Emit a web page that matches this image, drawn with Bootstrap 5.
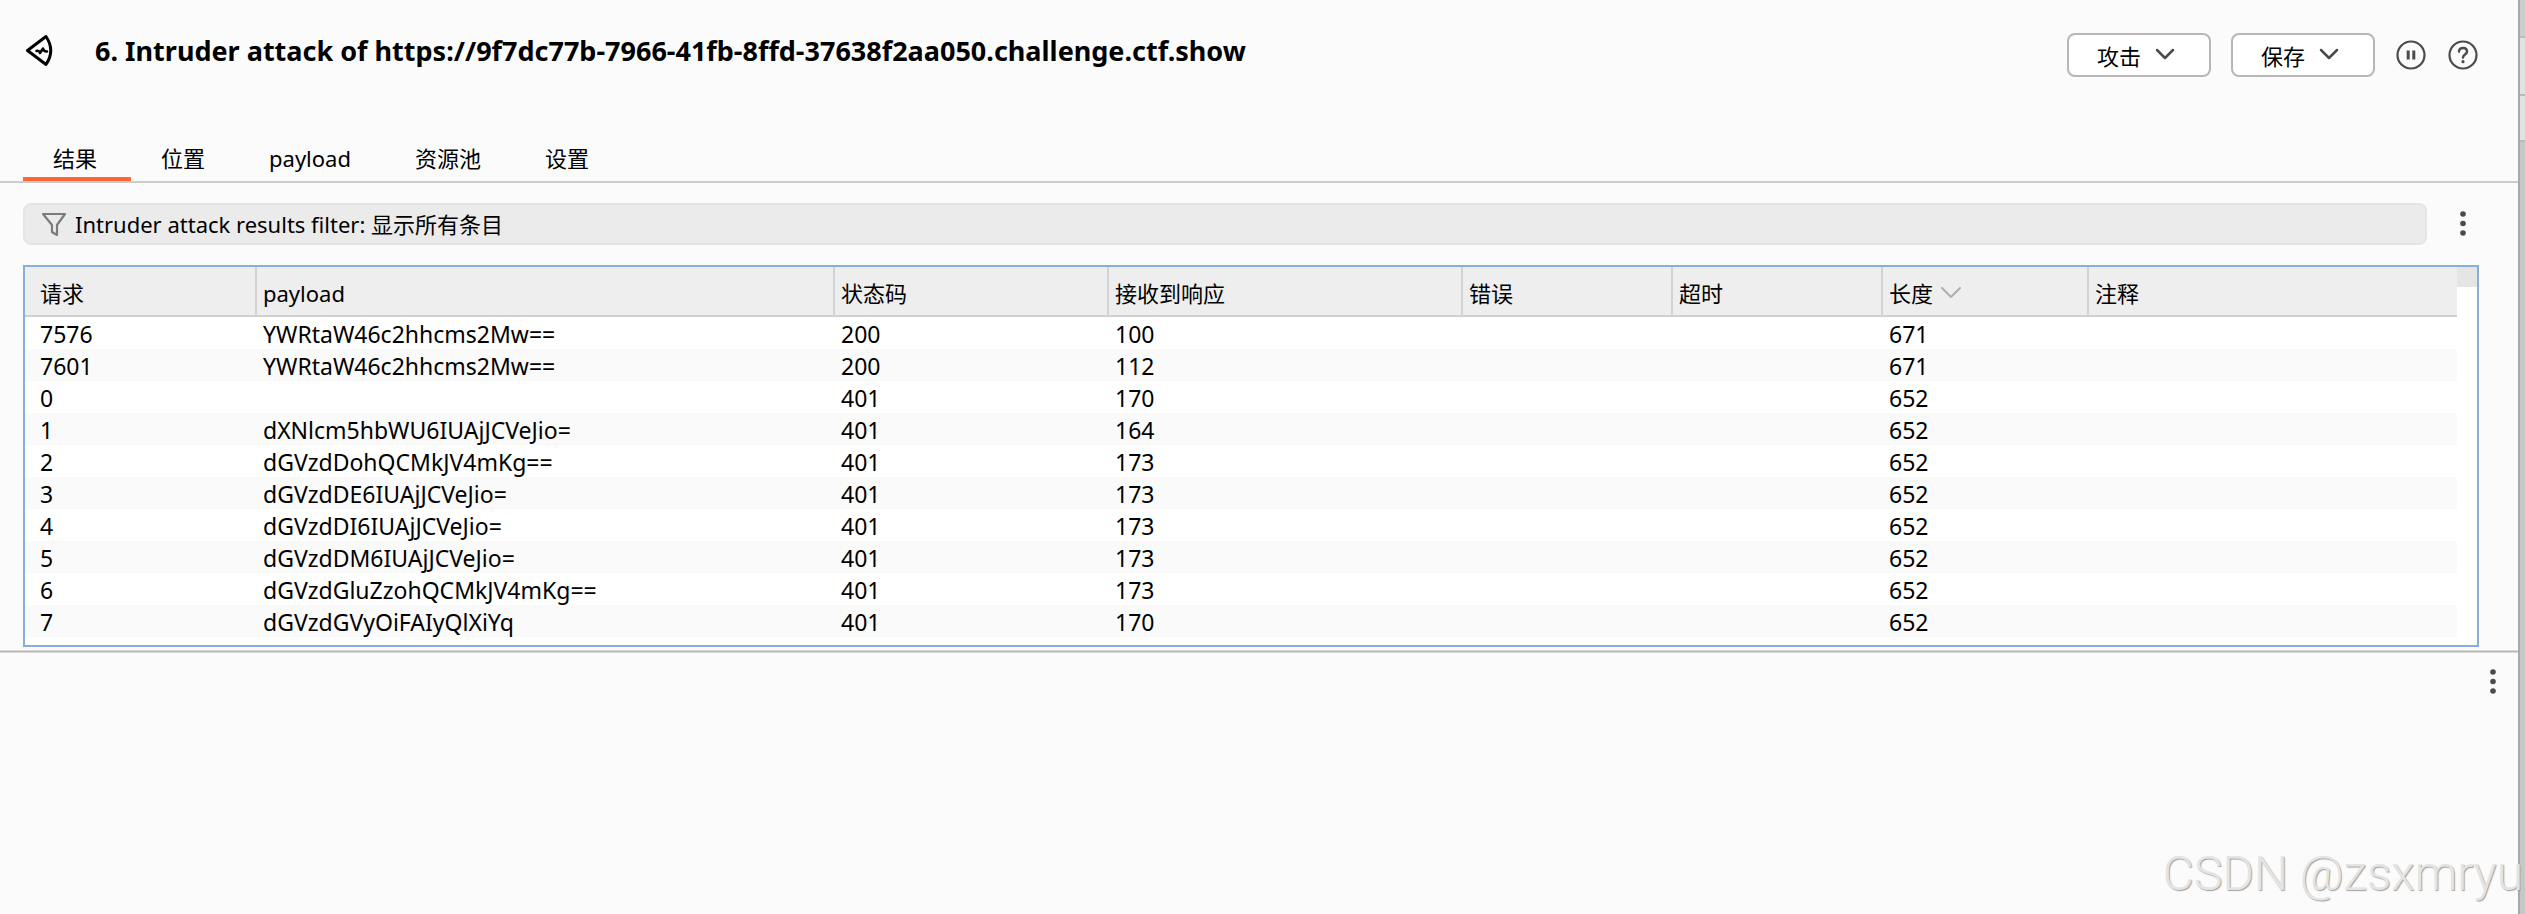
<!DOCTYPE html>
<html lang="zh-CN">
<head>
<meta charset="utf-8">
<meta name="viewport" content="width=device-width, initial-scale=1">
<title>6. Intruder attack</title>
<link rel="stylesheet" href="https://cdn.jsdelivr.net/npm/bootstrap@5.3.0/dist/css/bootstrap.min.css">
<style>
  body { font-family: "Noto Sans", "Noto Sans CJK SC", sans-serif; font-size: 22px; line-height: 30px; color: #000; background: #fbfbfb; }
  svg { display: block; flex: none; fill: none; stroke-linecap: round; stroke-linejoin: round; }
  .plain-btn { border: 0; padding: 0; background: transparent; color: #4b4b4b; }
  .title-bar { padding: 33px 39px 0 24px; height: 138px; }
  .title-text { font-size: 27px; line-height: 36px; font-weight: 700; margin: 0 0 0 40px; }
  .drop-btn { width: 144px; height: 44px; border: 2px solid #bbb5b5; border-radius: 8px; background: #fff; padding: 2px 0 0 28px; gap: 14px; color: #000; }
  .drop-btn svg { margin-bottom: 4px; }
  .tab-strip { padding-left: 23px; border-bottom: 2px solid #c9cdcc; }
  .tab-strip .nav-link { color: #000; padding: 5px 34px 4px 30px; border-bottom: 4px solid transparent; border-radius: 0; line-height: 30px; }
  .tab-strip .nav-link.active { border-bottom-color: #ff6633; }
  .filter-row { padding: 20px 39px 20px 23px; }
  .filter-bar { height: 42px; background: #ebebeb; border: 2px solid #e5e5e5; border-radius: 8px; padding: 0 16px; gap: 8px; color: #000; text-align: left; }
  .results-box { margin: 0 39px 3px 23px; border: 2px solid #86afdb; background: #fff; padding-bottom: 8px; }
  .results { table-layout: fixed; width: 100%; border-collapse: separate; border-spacing: 0; }
  .results th { font-weight: 400; background: #eee; border-right: 2px solid #d3d3d3; border-bottom: 2px solid #d0d0d0; padding: 4px 0 0 6px; height: 50px; line-height: 30px; }
  .results th:last-child { border-right: 0; }
  .results td { padding: 2px 0 0 6px; height: 32px; font-size: 23px; line-height: 30px; white-space: nowrap; }
  .results th:first-child, .results td:first-child { padding-left: 15px; }
  .results tbody tr:nth-child(even) { background: #fafafa; }
  .scroll-track { width: 20px; }
  .scroll-thumb { height: 20px; background: #e5e5e5; }
  .splitter { height: 3px; background: #bab4b4; border-top: 1px solid #dcd9d9; border-bottom: 1px solid #dcd9d9; }
  .lower-pane { padding: 14px 17px 0 0; }
  .backdrop { width: 7px; border-left: 2px solid #a8a8a8; background: #c8c7c7; }
  .backdrop-top { height: 38px; background: #cdcccc; border-bottom: 2px solid #b9bcbc; }
  .backdrop-mid { height: 58px; background: #e2e2e2; border-bottom: 2px solid #b9bcbc; }
  .backdrop-low { height: 46px; background: #e2e2e2; border-bottom: 2px solid #b9bcbc; }
  .watermark { right: 2px; bottom: 10px; font-family: Roboto, sans-serif; font-weight: 300; font-size: 48px; line-height: 60px; color: #e4e4e4; text-shadow: 1px 1px 1px #a0a0a0; white-space: nowrap; pointer-events: none; }
</style>
</head>
<body>
<div class="d-flex min-vh-100 position-relative overflow-hidden">
  <main class="d-flex flex-column flex-grow-1">
    <header class="title-bar d-flex align-items-start">
      <svg width="31" height="34" viewBox="0 0 31 34" stroke="#000" stroke-width="3"><path d="M3.500 17.500 22 3.500Q31.500 17.500 22 31.500Z"/><path d="M12.500 18Q15 17 16 20L19 15.500Q20 19 23 18.500" stroke-width="2.500"/></svg>
      <h1 class="title-text flex-grow-1">6. Intruder attack of https://9f7dc77b-7966-41fb-8ffd-37638f2aa050.challenge.ctf.show</h1>
      <div class="d-flex align-items-center">
        <button type="button" class="drop-btn d-flex align-items-center me-3">攻击
          <svg width="20" height="12" viewBox="0 0 20 12" stroke="#4b4b4b" stroke-width="2.500"><path d="M2 2 10 10 18 2"/></svg></button>
        <button type="button" class="drop-btn d-flex align-items-center ms-1">保存
          <svg width="20" height="12" viewBox="0 0 20 12" stroke="#4b4b4b" stroke-width="2.500"><path d="M2 2 10 10 18 2"/></svg></button>
        <button type="button" class="plain-btn ms-3 ps-1" aria-label="暂停"><svg width="32" height="32" viewBox="0 0 32 32" stroke="#4b4b4b" stroke-width="2.200"><circle cx="16" cy="16" r="13.500"/><path d="M13.200 11.500v9M18.800 11.500v9" stroke-width="3" stroke-linecap="butt"/></svg></button>
        <button type="button" class="plain-btn ms-3 ps-1" aria-label="帮助"><svg width="32" height="32" viewBox="0 0 32 32" stroke="#4b4b4b" stroke-width="2.200"><circle cx="16" cy="16" r="13.500"/><path d="M12 12.500C12.300 7.800 20 7.800 20 12.500 20 15.700 16 15.300 16 18.500" stroke-width="2.500"/><circle cx="16" cy="22.700" r="1.600" fill="#4b4b4b" stroke="none"/></svg></button>
      </div>
    </header>

    <nav class="tab-strip nav">
      <a class="nav-link active" href="#results" aria-current="page">结果</a>
      <a class="nav-link" href="#positions">位置</a>
      <a class="nav-link" href="#payload">payload</a>
      <a class="nav-link" href="#pool">资源池</a>
      <a class="nav-link" href="#settings">设置</a>
    </nav>

    <div class="filter-row d-flex align-items-center">
      <button type="button" class="filter-bar d-flex align-items-center flex-grow-1">
        <svg width="26" height="26" viewBox="0 0 26 26" stroke="#7b7b7b" stroke-width="2.200"><path d="M2 3H24L16 14V24L11 21V14Z"/></svg>
        <span>Intruder attack results filter: 显示所有条目</span>
      </button>
      <button type="button" class="plain-btn ps-4 pe-2 ms-1" aria-label="更多选项"><svg width="16" height="30" viewBox="0 0 16 30"><g fill="#4b4b4b"><circle cx="8" cy="5" r="2.800"/><circle cx="8" cy="14.500" r="2.800"/><circle cx="8" cy="24" r="2.800"/></g></svg></button>
    </div>

    <section class="results-box d-flex" id="results">
      <table class="results">
        <colgroup><col style="width:232px"><col style="width:578px"><col style="width:274px"><col style="width:354px"><col style="width:210px"><col style="width:210px"><col style="width:206px"><col></colgroup>
        <thead><tr><th scope="col">请求</th><th scope="col">payload</th><th scope="col">状态码</th><th scope="col">接收到响应</th><th scope="col">错误</th><th scope="col">超时</th><th scope="col"><span class="d-flex align-items-center gap-2">长度 <svg width="20" height="12" viewBox="0 0 20 12" stroke="#b0b0b0" stroke-width="2"><path d="M1 1 10 10 19 1"/></svg></span></th><th scope="col">注释</th></tr></thead>
        <tbody>
          <tr><td>7576</td><td>YWRtaW46c2hhcms2Mw==</td><td>200</td><td>100</td><td></td><td></td><td>671</td><td></td></tr>
          <tr><td>7601</td><td>YWRtaW46c2hhcms2Mw==</td><td>200</td><td>112</td><td></td><td></td><td>671</td><td></td></tr>
          <tr><td>0</td><td></td><td>401</td><td>170</td><td></td><td></td><td>652</td><td></td></tr>
          <tr><td>1</td><td>dXNlcm5hbWU6IUAjJCVeJio=</td><td>401</td><td>164</td><td></td><td></td><td>652</td><td></td></tr>
          <tr><td>2</td><td>dGVzdDohQCMkJV4mKg==</td><td>401</td><td>173</td><td></td><td></td><td>652</td><td></td></tr>
          <tr><td>3</td><td>dGVzdDE6IUAjJCVeJio=</td><td>401</td><td>173</td><td></td><td></td><td>652</td><td></td></tr>
          <tr><td>4</td><td>dGVzdDI6IUAjJCVeJio=</td><td>401</td><td>173</td><td></td><td></td><td>652</td><td></td></tr>
          <tr><td>5</td><td>dGVzdDM6IUAjJCVeJio=</td><td>401</td><td>173</td><td></td><td></td><td>652</td><td></td></tr>
          <tr><td>6</td><td>dGVzdGluZzohQCMkJV4mKg==</td><td>401</td><td>173</td><td></td><td></td><td>652</td><td></td></tr>
          <tr><td>7</td><td>dGVzdGVyOiFAIyQlXiYq</td><td>401</td><td>170</td><td></td><td></td><td>652</td><td></td></tr>
        </tbody>
      </table>
      <div class="scroll-track flex-shrink-0"><div class="scroll-thumb"></div></div>
    </section>

    <div class="splitter"></div>
    <section class="lower-pane flex-grow-1 d-flex justify-content-end align-items-start">
      <button type="button" class="plain-btn" aria-label="更多选项"><svg width="16" height="30" viewBox="0 0 16 30"><g fill="#4b4b4b"><circle cx="8" cy="5" r="2.800"/><circle cx="8" cy="14.500" r="2.800"/><circle cx="8" cy="24" r="2.800"/></g></svg></button>
    </section>
  </main>
  <div class="backdrop flex-shrink-0"><div class="backdrop-top"></div><div class="backdrop-mid"></div><div class="backdrop-low"></div></div>
  <div class="watermark position-absolute">CSDN @zsxmryu</div>
</div>
<script src="https://cdn.jsdelivr.net/npm/bootstrap@5.3.0/dist/js/bootstrap.bundle.min.js"></script>
</body>
</html>
